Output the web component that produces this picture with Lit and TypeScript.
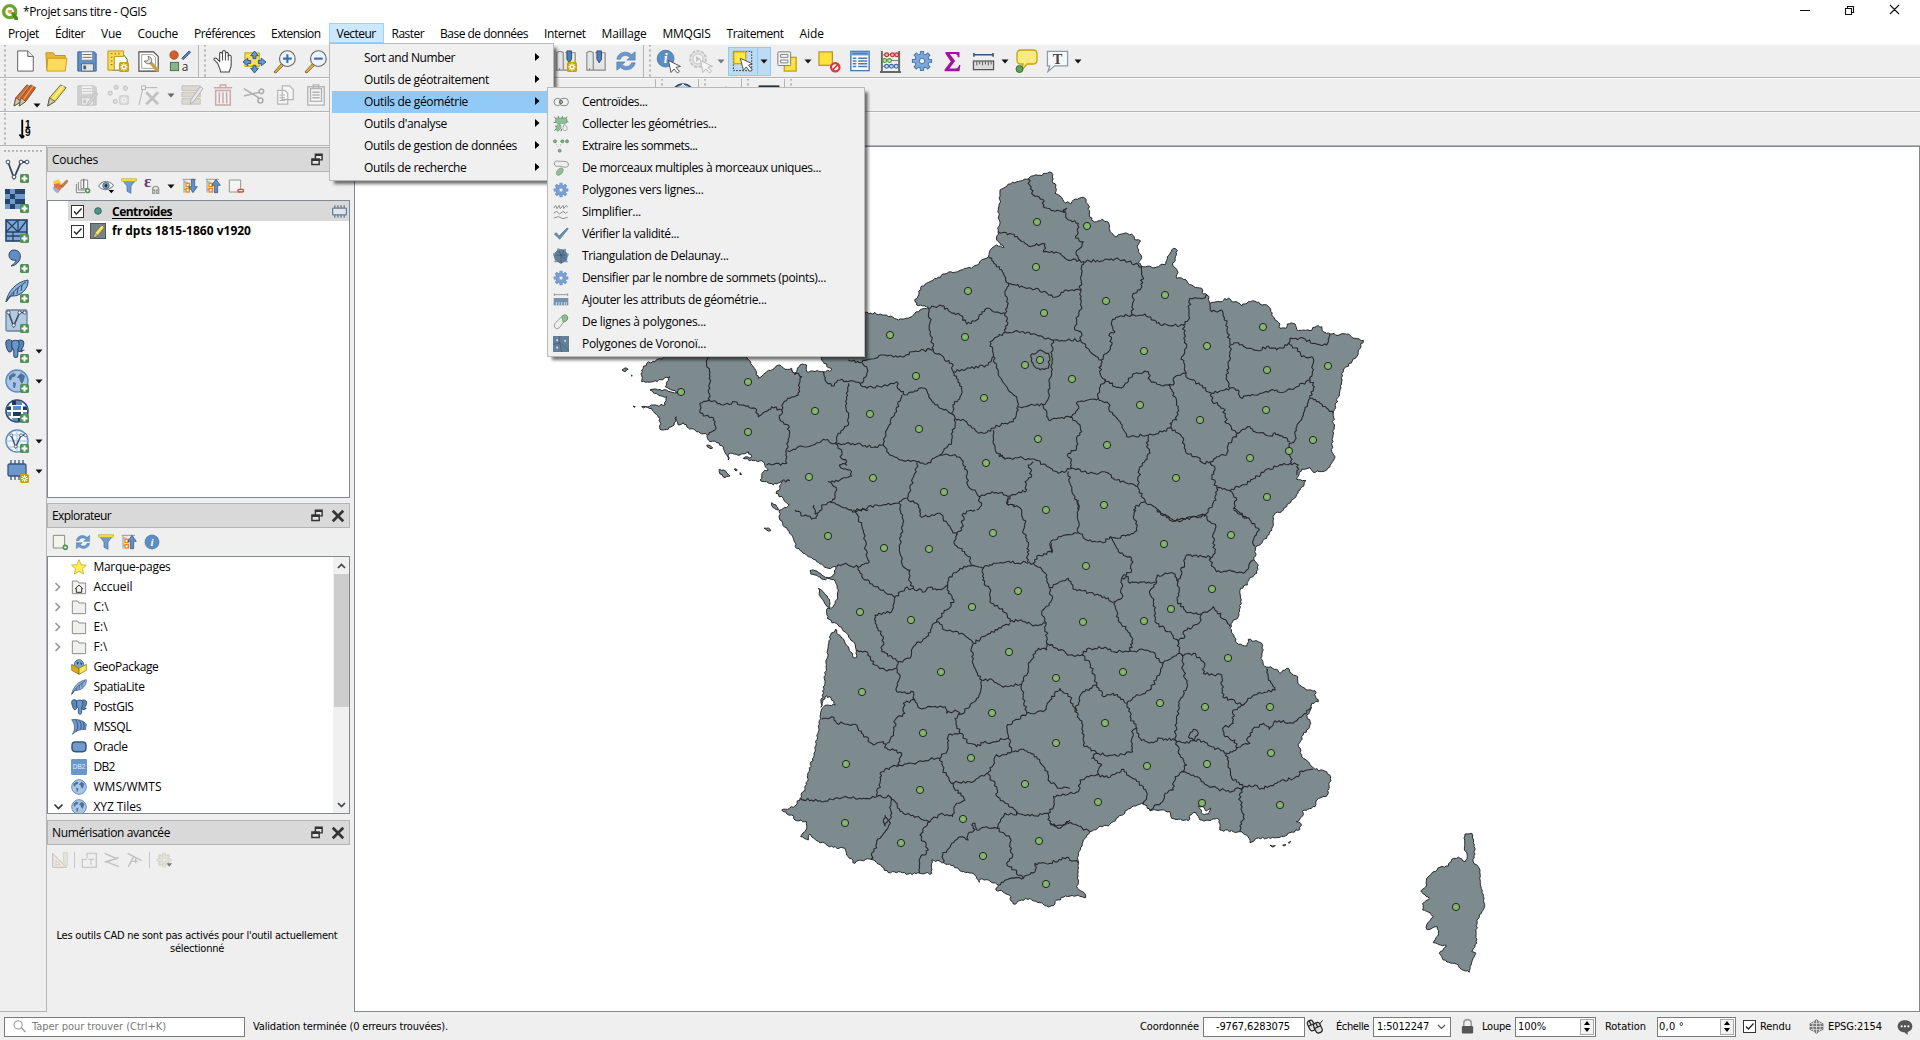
import { LitElement, html, css, svg, nothing } from "lit";
import { customElement } from "lit/decorators.js";

/* ---------- icons (24 x 24 boxes) ---------- */
const B = "#5d8ac0";
const D = "#2b4a6f";
const plus = svg`<rect x="15" y="15" width="9" height="9" rx="1.500" fill="#4f9153"/><path d="M19.500 16.500v6M16.500 19.500h6" stroke="#fff" stroke-width="2"/>`;
const spark = (x: number, y: number) => svg`<g transform="translate(${x} ${y})"><rect width="11" height="11" rx="2" fill="#caa20c"/><path d="M5.500 1.500v8M1.500 5.500h8M2.700 2.700l5.600 5.600M8.300 2.700l-5.600 5.600" stroke="#fff" stroke-width="1.300"/><circle cx="5.500" cy="5.500" r="1.200" fill="#caa20c"/></g>`;
const cursor = svg`<path d="M12.500 11.500l2.500 12 3-3.500 3.500 4 2-1.600-3.500-4 4.500-1z" fill="#fff" stroke="#555" stroke-width="1"/>`;
const refresh = svg`<path d="M2 10C3 4 9 1 15 3l3 2 4-3v9h-9l3.500-3C12 4.500 7 6 6 10z" fill="#6a98cf" stroke="#3d6ea5" stroke-width=".6"/><path d="M22 14c-1 6-7 9-13 7l-3-2-4 3v-9h9l-3.500 3C12 19.500 17 18 18 14z" fill="#6a98cf" stroke="#3d6ea5" stroke-width=".6"/>`;
const gear = (f: string, s: string) => svg`<path d="M12 1v22M1 12h22M4.200 4.200l15.600 15.600M19.800 4.200L4.200 19.800" stroke="${s}" stroke-width="4.600"/><circle cx="12" cy="12" r="8.300" fill="${s}"/><path d="M12 2v20M2 12h20M5 5l14 14M19 5L5 19" stroke="${f}" stroke-width="3"/><circle cx="12" cy="12" r="7.300" fill="${f}"/><circle cx="12" cy="12" r="3" fill="#efefef" stroke="${s}"/>`;
const globeLand = svg`<circle cx="12" cy="12" r="11" fill="#a9c5e4" stroke="${B}" stroke-width="1.400"/><path d="M4 7l4-3 3 1-1 2.500-3 1-1 3-2-1zM13 7l3-3 4 3-1 4-2 4-2-3-1-3-2 0zM8 13l3 1-1 5-1.500 0z" fill="#3d6291" opacity=".85"/>`;
const elephant = svg`<path d="M9 3C7 .5 2 0 1 4c0 5 2 10 4 12 2 1 3-1 4-3z" fill="#5b86ba" stroke="${D}" stroke-width="1.300"/><path d="M15 3c3-3 9-2 8.500 3-1 5-3 7-3.500 8h3l-3 2-4-1z" fill="#5b86ba" stroke="${D}" stroke-width="1.300"/><path d="M9 3c2-2 6-2 8 0 2 4 0 8-1 10v7c0 4-5 4-5 0v-6c-3-3-3-8-2-11z" fill="#6b97cb" stroke="${D}" stroke-width="1.300"/>`;
const feather = svg`<path d="M1 23C3 12 11 3 23 1c1 8-7 17-17 16z" fill="#8fb4dc" stroke="${D}" stroke-width="1"/><path d="M1 23C6 14 13 8 21 3M9 13l-1 4M13 9l-1 6M17 6l-1 6" stroke="${D}" fill="none"/>`;
const funnel = svg`<path d="M1 2h22l-8 10v11l-6-3v-8z" fill="#6f9bd0" stroke="#3f6b9c" stroke-width="1"/><path d="M1 1h22v4H1z" fill="#f9e03a" stroke="#b9a31a" stroke-width=".7"/>`;
const floppy = svg`<path d="M2 2h18l2 2v19H2z" fill="#6090c8" stroke="#2f5d91"/><path d="M6 2h12v9H6z" fill="#fff" stroke="#88a"/><path d="M7 5h10M7 8h10" stroke="#555"/><path d="M6 15h13v8H6z" fill="#e4e4e4" stroke="#567"/><path d="M8 17h3v4H8z" fill="#3b618f"/>`;
const magn = (s: unknown) => svg`<path d="M1 23l8-9 2 2-8 8z" fill="#f2b02a" stroke="#5a4a20" stroke-width=".8"/><circle cx="15" cy="9" r="8.200" fill="#edf3fa" stroke="#666" stroke-width="1.200"/>${s}`;
const pencil = (f: string, d: string) => svg`<path d="M17 1l6 3-12 15-8 5 2-9z" fill="${f}" stroke="#5b5330" stroke-width=".9"/><path d="M20 2L8 17" stroke="${d}" stroke-width="1.600"/><path d="M5 15l6 4-8 5z" fill="#d8c7a5" stroke="#444" stroke-width=".8"/>`;
const info = svg`<circle cx="12" cy="12" r="10.500" fill="#5c8dc5" stroke="#3f6ea5"/><text x="12" y="18" font-family="Liberation Serif,serif" font-size="17" font-weight="700" font-style="italic" fill="#fff" text-anchor="middle">i</text>`;
const folder = svg`<path d="M2 3h8l2 3h10v16H2z" fill="#f0f0ef" stroke="#8d8d8d" stroke-width="1.500"/>`;
const tree = (p: string) => svg`<path d="M3 2v20M3 6h5M3 17h5M1 2h20" stroke="#999" stroke-width="1.500" fill="none"/><rect x="6" y="8" width="5" height="5" fill="#fff" stroke="#e8871a" stroke-width="2"/><rect x="6" y="16" width="5" height="5" fill="#fff" stroke="#e8871a" stroke-width="2"/><path d="${p}" fill="#5f8fca" stroke="${D}" stroke-width="1"/>`;
const vee = svg`<path d="M3 3l6 16 7-16h5" fill="none" stroke="#34495e" stroke-width="1.800"/><g fill="#fff" stroke="#34495e"><circle cx="3" cy="3" r="1.900"/><circle cx="9" cy="18" r="1.900"/><circle cx="16" cy="3" r="1.900"/><circle cx="22" cy="3" r="1.900"/></g>`;
const bookmark = svg`<path d="M2 3c2-2 5-2 7 0v19H2zM11 3h11v19H5V20" fill="#e6e6e6" stroke="#8a8a8a" stroke-width="1.300"/><path d="M13 1h5v9l-2.500 4L13 10z" fill="#4f7fbb" stroke="#2b4a6f"/>`;

const ICONS: Record<string, unknown> = {
  new: svg`<path d="M4 1h11l6 6v16H4z" fill="#fff" stroke="#555" stroke-width="1"/><path d="M15 1v6h6" fill="#eee" stroke="#555"/>`,
  open: svg`<path d="M1 3h8l2 3h11v16H2z" fill="#e8b92e" stroke="#b8901b"/><path d="M3 9h21l-2 14H2z" fill="#ffd95c" stroke="#c79d20"/>`,
  save: floppy,
  layout: svg`<path d="M6 5h12l4 5v12H6z" fill="#fff" stroke="#555"/><path d="M1 1h17v6H8v15H1z" fill="#fbdc56" stroke="#b8911b"/><path d="M4 4h2M4 8h2M4 12h2M4 16h2M9 3v2M13 3v2" stroke="#7c6414"/>${spark(13, 13)}`,
  layoutmgr: svg`<path d="M1 2h16l5 5v16H1z" fill="#fff" stroke="#444" stroke-width="1.200"/><path d="M4 5h12l3 3v12H4z" fill="none" stroke="#999"/><path d="M13 13l9 10" stroke="#c9a13c" stroke-width="3.600"/><path d="M7 12c1 3 5 4 7 2 2-3 1-6-3-7l1 3-2 2z" fill="#e4e4e4" stroke="#666"/>`,
  style: svg`<circle cx="5.500" cy="5.500" r="4.500" fill="#d3602c" stroke="#a7451a"/><rect x="1.500" y="13.500" width="9" height="9" fill="#88b489" stroke="#3f7044"/><path d="M14 9l8-8 1.500 1.500-8 8z" fill="${B}" stroke="${D}"/><text x="17.500" y="23" font-size="13" font-family="Open Sans,sans-serif" fill="#333" text-anchor="middle">a</text>`,
  pan: svg`<path d="M6 14L2 10c0-2 2-2 3-1l3 3V4c0-2 2-2 3 0V2c0-2 3-2 3 0v2c0-2 3-2 3 0v2c1-1 3-1 3 1v9c0 3-2 4-2 7H9c0-3-2-5-3-9z" fill="#fff" stroke="#444" stroke-width="1.100"/><path d="M11 4v7M14 4v7M17 5v6" stroke="#444"/>`,
  panfull: svg`<rect x="2" y="3" width="15" height="14" fill="#f7e24a" stroke="#b79b12"/><path d="M12 1l4 5h-2.500v3h-3V6H8zM12 24l4-5h-2.500v-3h-3v3H8zM0 12.500l5-4V11h3v3H5v2.500zM24 12.500l-5-4V11h-3v3h3v2.500z" fill="#6497d4" stroke="#2e5585"/>`,
  zoomin: magn(svg`<path d="M15 4.500v9M10.500 9h9" stroke="#3e6ea8" stroke-width="2.200"/>`),
  zoomout: magn(svg`<path d="M10.500 9h9" stroke="#3e6ea8" stroke-width="2.200"/>`),
  bookmarknew: svg`${bookmark}${spark(13, 13)}`,
  bookmark,
  refresh,
  identify: svg`<g transform="scale(.8)">${info}</g>${cursor}`,
  action: svg`<g opacity=".35"><circle cx="10" cy="10" r="8" fill="#ccc" stroke="#777" stroke-width="2" stroke-dasharray="3 1.500"/><circle cx="10" cy="10" r="5" fill="#fff" stroke="#777"/><path d="M8 7l5 3-5 3z" fill="#777"/>${cursor}</g>`,
  select: svg`<rect x="1.500" y="1.500" width="20" height="21" fill="none" stroke="#333" stroke-dasharray="2 1.300"/><rect x="2" y="2" width="13" height="13" fill="#ffe94a" stroke="#c2a100" stroke-width="1.300"/><path d="M9 9l3.500 13 3-3.500 4 5 2.500-2-4-5 4-1.500z" fill="#fff" stroke="#444"/>`,
  form: svg`<rect x="9" y="8" width="13" height="15" fill="#ffe23f" stroke="#b99b12" stroke-width="1.300"/><rect x="2" y="2" width="14" height="15" rx="1" fill="#f1f1f1" stroke="#777"/><path d="M5 5h8v3H5zM5 11h8v3H5z" fill="#fff" stroke="#777"/>`,
  deselect: svg`<rect x="1" y="2" width="14" height="14" fill="#ffe23f" stroke="#b99b12" stroke-width="1.300"/><circle cx="18" cy="18" r="5.500" fill="#d9373b"/><circle cx="18" cy="18" r="3.200" fill="#fff"/><path d="M15 21l6-6" stroke="#d9373b" stroke-width="1.600"/>`,
  table: svg`<rect x="2" y="1.500" width="20" height="21" fill="#fff" stroke="#4b7bb5" stroke-width="1.500"/><path d="M2 2h20v4H2z" fill="#78a6dc"/><path d="M4 9h4M4 12h4M4 15h4M4 18h4M10 9h10M10 12h10M10 15h10M10 18h10M4 4h16" stroke="#4b7bb5" stroke-width="1.500"/>`,
  abacus: svg`<path d="M3 1v21M21 1v21M1 23h22" stroke="#666" stroke-width="2"/><path d="M3 5h18M3 11h18M3 17h18" stroke="#777"/><g stroke-width="1.200"><g fill="#f3b5b5" stroke="#c02b2b"><circle cx="8" cy="5" r="2"/><circle cx="14" cy="5" r="2"/><circle cx="18.500" cy="5" r="2"/></g><g fill="#c6e6bf" stroke="#4a9b3d"><circle cx="6" cy="11" r="2"/><circle cx="11" cy="11" r="2"/></g><g fill="#c5daf0" stroke="#3a6ea7"><circle cx="8" cy="17" r="2"/><circle cx="13" cy="17" r="2"/><circle cx="18" cy="17" r="2"/></g></g>`,
  gear: gear("#7aa6dc", "#46719f"),
  sigma: svg`<path d="M4 1h16v6h-2c0-3-2-3.500-4-3.500H9l6 8-6.500 8.500H15c3 0 4-2 4.500-4h1.500L20 23H3v-2l7-9-6-9z" fill="#a3139e"/>`,
  ruler: svg`<path d="M2 5h20M2 3v4M22 3v4" stroke="#34527a" stroke-width="1.600"/><rect x="1.500" y="11.500" width="21" height="9" fill="#dcdcdc" stroke="#555" stroke-width="1.300"/><path d="M5 12v4M8 12v3M11 12v4M14 12v3M17 12v4M20 12v3" stroke="#555"/>`,
  tip: svg`<path d="M7 1h12q4 0 4 4v6q0 4-4 4h-6l-5 6 1-6H7q-4 0-4-4V5q0-4 4-4z" fill="#fbe981" stroke="#c4a40f" stroke-width="1.300"/><circle cx="5.500" cy="20" r="3.500" fill="#5fa158" stroke="#3a6e36"/>`,
  textann: svg`<path d="M1.500 1.500h21v15H9l-7 6 2-6H1.500z" fill="#f7f9fb" stroke="#8c9ba8" stroke-width="1.300"/><text x="12" y="14.500" font-family="Liberation Serif,serif" font-size="15" font-weight="700" fill="#444" text-anchor="middle">T</text>`,
  pencils: svg`<g transform="translate(-3 0)">${pencil("#d46a33", "#f09a68")}</g><g transform="translate(3 0) scale(.9 1)">${pencil("#cf5f25", "#f09a68")}</g>`,
  pencil: pencil("#f3dc4b", "#fff6a8"),
  savedit: svg`<g opacity=".3"><g style="filter:grayscale(1)">${floppy}</g><path d="M22 9l2 2-9 11-3 1 1-3z" fill="#999" stroke="#555"/></g>`,
  dots: svg`<g opacity=".35" fill="#bbb" stroke="#666"><circle cx="3.500" cy="10" r="2.300"/><circle cx="10" cy="3.500" r="2.300"/><circle cx="20" cy="4.500" r="2.300"/><circle cx="9" cy="19" r="2.300"/></g><g opacity=".35" style="filter:grayscale(1)">${spark(13, 12)}</g>`,
  vertex: svg`<g opacity=".38"><path d="M6 4h15M5 6L1 23" stroke="#444" fill="none"/><rect x="4" y="2" width="4" height="4" fill="#fff" stroke="#444"/><path d="M9 9l13 13M22 9L9 22" stroke="#777" stroke-width="3"/></g>`,
  modattr: svg`<g opacity=".38"><path d="M1 2h20v5H1zM1 9h20v5H1zM1 16h20v6H1z" fill="#bcb98f" stroke="#777"/><path d="M21 3l3 2-10 14-4 3 1-5z" fill="#ddd" stroke="#444"/></g>`,
  trash: svg`<g opacity=".38" fill="none" stroke="#8b3a3a" stroke-width="1.600"><path d="M4 7h16v16H4zM2 4h20M9 4V1h6v3M8 9v12M12 9v12M16 9v12"/></g>`,
  cut: svg`<g opacity=".42" fill="none" stroke="#555" stroke-width="1.700"><path d="M1 5l16 10M1 13l17-4"/><circle cx="20" cy="8" r="2.500"/><circle cx="19" cy="18" r="2.700"/></g>`,
  copy: svg`<g opacity=".38" fill="#fff" stroke="#555" stroke-width="1.300"><path d="M9 2h8l4 4v11H9zM4 7h8l3 3v12H4z"/><path d="M6 12h6M6 15h6M6 18h6"/></g>`,
  paste: svg`<g opacity=".38" fill="#fff" stroke="#555" stroke-width="1.500"><path d="M3 3h18v20H3zM6 5h12v14H6zM9 1h6v4H9z"/><path d="M8 9h8M8 12h8M8 15h8"/></g>`,
  sort: svg`<path d="M9 2v19M9 22l-3-4M9 22l2-3" stroke="#000" stroke-width="2" fill="none"/><text font-family="Liberation Sans,sans-serif" font-weight="700" font-size="11" x="12" y="11">1</text><text font-family="Liberation Sans,sans-serif" font-weight="700" font-size="11" x="12" y="20">9</text>`,
  globegrid: svg`<circle cx="12" cy="12" r="11" fill="#8fb2dc" stroke="${D}" stroke-width="1.600"/><path d="M12 1v22M1 12h22M3 6h18M3 18h18M12 1c-7 6-7 16 0 22M12 1c7 6 7 16 0 22" stroke="#fff" fill="none"/>`,
  ball: svg`<circle cx="12" cy="12" r="11" fill="#2c7fb8"/>`,
  screen: svg`<rect x="1" y="2" width="22" height="20" fill="#8aa9cf" stroke="#222c3a" stroke-width="3"/>`,
  addvec: svg`${vee}${plus}`,
  addras: svg`<path d="M0 0h20v20H0z" fill="#6d99cc"/><path d="M0 0h5v5H0zM10 0h5v5h-5zM15 0h5v5h-5zM5 5h5v5H5zM0 10h5v5H0zM10 10h5v5h-5zM5 15h5v5H5zM15 10h5v5h-5z" fill="#27436a"/>${plus}`,
  addmesh: svg`<rect x="1" y="1" width="21" height="21" fill="#7ea8d8" stroke="#27436a" stroke-width="1.600"/><path d="M1 13h21M13 1v12M1 1l12 12M13 1L1 13M22 1l-9 12M8 13v9M1 17h14" stroke="#27436a" stroke-width="1.300"/>${plus}`,
  addcsv: svg`<path d="M9 1c6 0 8 6 5 11-2 3-5 5-8 5 3-2 5-4 5-6-4 1-7-1-7-5 0-3 2-5 5-5z" fill="#5f8dc4" stroke="${D}"/>${plus}`,
  addspatia: svg`${feather}${plus}`,
  addvirt: svg`<rect x="1" y="1" width="21" height="21" rx="1.500" fill="#b4c9e0" stroke="#65829f" stroke-width="1.300"/><g transform="translate(1 1) scale(.85)">${vee}</g>${plus}`,
  addpg: svg`<g transform="scale(.8)">${elephant}</g>${plus}`,
  addwms: svg`${globeLand}${plus}`,
  addwcs: svg`<circle cx="12" cy="12" r="11" fill="#fff" stroke="${D}" stroke-width="1.600"/><path d="M7 2h10v4H7zM2 7h4v4H1zM8 7h8v4H8zM18 7h4l1 4h-5zM2 13h4v4H3zM8 13h8v4H8zM18 13h4l-1 4h-3zM7 19h10v3H8z" fill="#5d8ac0"/><path d="M8 13h8v4H8zM2 8h4v3H2zM18 8h4v3h-4zM7 2h4v4H7zM13 19h3v3h-3z" fill="#1f3b60"/>${plus}`,
  addwfs: svg`<circle cx="12" cy="12" r="11" fill="#eef4fb" stroke="${B}" stroke-width="1.400"/><path d="M12 1v22M1 12h22M4 6h17M4 18h17" stroke="#a6c0de"/><g transform="translate(4 4) scale(.75)">${vee}</g>${plus}`,
  addmem: svg`<path d="M6 1v5M10 1v5M14 1v5M18 1v5M6 16v5M10 16v5M14 16v5" stroke="#3b5672" stroke-width="1.300"/><rect x="3" y="5" width="18" height="12" rx="1.500" fill="#6b97cb" stroke="#33557f" stroke-width="1.300"/><g transform="translate(15 15) scale(.82)">${spark(0, 0)}</g>`,
  brush: svg`<path d="M2 5l8-3 6 9-7 3C4 14 1 10 2 5z" fill="#f5d23b"/><path d="M3 9l8-1 5 5-7 9c-4 0-7-6-6-13z" fill="#e2724e"/><path d="M1 14l5 1 5 3-3 4c-4 0-6-4-7-8z" fill="#9bb2cf"/><path d="M13 12l9-9 2 2-8 9z" fill="#c0843b" stroke="#8a5a2b"/>`,
  addgroup: svg`<path d="M2 9v13h13M5 6v12h12" stroke="#777" fill="none" stroke-width="1.300"/><path d="M9 3h10v13H9z" fill="#fff" stroke="#777" stroke-width="1.300"/><path d="M13 1v14" stroke="#777" stroke-width="2"/><circle cx="19" cy="19" r="4" fill="#4f9153"/><path d="M19 17v4M17 19h4" stroke="#fff" stroke-width="1.300"/>`,
  eye: svg`<path d="M1 12C6 3 17 3 23 11c-6 8-16 9-22 1z" fill="#fff" stroke="#8b8b8b" stroke-width="1.600"/><circle cx="12" cy="11.500" r="5" fill="#6f96c2" stroke="#47678b"/><circle cx="12" cy="11.500" r="2" fill="#222"/><path d="M16 18h8l-4 5z" fill="#000"/>`,
  funnel,
  eps: svg`<text x="0" y="14" font-family="Liberation Serif,serif" font-size="26" font-weight="700" fill="#6a3d78">ε</text><path d="M13 22v-5c0-6 9-6 9 0v5M13 18h3v5h-3zM19 18h3v5h-3z" fill="none" stroke="#999" stroke-width="2"/>`,
  expand: tree("M14 2h5v11h4l-6.500 9L10 13h4z"),
  collapse: tree("M14 22h5V11h4L16.500 2 10 11h4z"),
  remove: svg`<path d="M2 3h17v18H2z" fill="#f4f4f4" stroke="#7d8a7d" stroke-width="1.300"/><rect x="14" y="16" width="10" height="6" rx="2" fill="#e8474c"/><path d="M16 19h6" stroke="#fff" stroke-width="1.500"/>`,
  addsel: svg`<path d="M2 2h17v19H2z" fill="#f4f4ee" stroke="#8a8f80" stroke-width="1.500"/><circle cx="20" cy="20" r="3" fill="#fff" stroke="#4f9153" stroke-width="2.400"/>`,
  info,
  star: svg`<path d="M12 1l3.200 7.500 8 .8-6 5.400 1.800 8L12 18.500 5 22.700l1.800-8-6-5.400 8-.8z" fill="#ffee58" stroke="#c9a81c" stroke-width="1.200"/>`,
  home: svg`${folder}<path d="M6 15l6-6 6 6M8 14v6h8v-6" fill="none" stroke="#333" stroke-width="1.500"/>`,
  folder,
  gpkg: svg`<circle cx="12" cy="8" r="7" fill="#7fa6d3" stroke="${D}"/><path d="M8 4l4 1-2 4zM13 5l4 1-1 4z" fill="${D}"/><path d="M1 8l11 6v9L1 17z" fill="#d9ac16" stroke="#7c620b"/><path d="M23 8l-11 6v9l11-6z" fill="#ffe75a" stroke="#7c620b"/>`,
  feather, elephant,
  mssql: svg`<path d="M1 1c9-1 18 1 22 7-.5 3-1 5-1 8-7-1-14 1-20 7 4-6 5-14-1-22z" fill="#6f99cc" stroke="${D}"/><path d="M7 1c4 6 4 12 1 18M12 2c4 5 4 9 2 14M18 4c2 4 2 8 1 11" stroke="${D}" fill="none" stroke-width="1.300"/>`,
  oracle: svg`<rect x="1.500" y="4.500" width="21" height="14.500" rx="5" fill="#6f9acb" stroke="#35557f" stroke-width="2.200"/>`,
  db2: svg`<rect width="24" height="24" rx="2" fill="#6797cd"/><text x="12" y="15.500" font-size="9.500" font-family="Liberation Sans,sans-serif" fill="#e8f0fa" text-anchor="middle">DB2</text>`,
  globe: globeLand,
  chip: svg`<path d="M4.500 2v5M9.500 2v5M14.500 2v5M19.500 2v5M4.500 17v5M9.500 17v5M14.500 17v5M19.500 17v5" stroke="#5d7c95" stroke-width="2"/><rect x="1" y="6.500" width="22" height="11" rx="1.500" fill="#e2e6ea" stroke="#5d7c95" stroke-width="2"/>`,
  m1: svg`<g fill="none" stroke="#888" stroke-width="1.500"><circle cx="7" cy="12" r="5.500"/><rect x="10" y="6.500" width="13" height="11" rx="5"/></g><circle cx="12" cy="12" r="2.500" fill="#7bb083" stroke="#555"/>`,
  m2: svg`<g stroke="#777" stroke-width="1.500"><path d="M2 1l3 4M8 0v4M14 0v4M21 1l-3 4M1 10l4-1M23 9l-4-1M2 22l4-4M3 15l3 1M12 23l1-4"/></g><rect x="4" y="3" width="17" height="8" rx="3" fill="#8dc193" stroke="#5f8f66"/><path d="M9 12c4 0 4 8-2 11-5-3-1-11 2-11z" fill="#8dc193" stroke="#5f8f66"/><path d="M17 12c5 3 6 10 1 10s-3-6-1-10z" fill="#eee" stroke="#888"/>`,
  m3: svg`<g fill="#7bb083" stroke="#5e7a62"><circle cx="3" cy="5" r="2.300"/><circle cx="14" cy="5" r="2.300"/><circle cx="21" cy="5" r="2.300"/><circle cx="10" cy="19" r="2.300"/></g><path d="M5 9l1 2M7 12l1 2M12 9l-1 3" stroke="#aaa"/>`,
  m4: svg`<path d="M2 6c0-6 5-4 9-4s11-1 12 4-5 6-9 4S3 12 2 6z" fill="#eee" stroke="#888" stroke-width="1.300"/><path d="M13 12c5 1 1 11-6 11-5-2 1-12 6-11z" fill="#8dc193" stroke="#5f8f66"/>`,
  gearm: gear("#7aa0d4", "#6d94cb"),
  m6: svg`<path d="M1 6l3-4 2 5 3-5 2 5 4-5 1 5 4-5 2 3M1 14l4-3 5 4 5-4 4 3 3-2M1 21l7-2 7 3 7-2" fill="none" stroke="#8a8f92" stroke-width="1.500"/>`,
  m7: svg`<path d="M2 12l3-2 4 5L21 3l2 1L10 20z" fill="#6a8caa" stroke="#557591"/>`,
  m8: svg`<path d="M8 2l9 1 5 7-2 9-8 4-8-4-3-9z" fill="#62809a" stroke="#45607a"/><path d="M8 2l4 9 10-1M12 11L1 10M12 11l0 12M12 11l8 8M12 11l5-8" stroke="#38536b" fill="none"/><g fill="#8a99a5"><circle cx="8" cy="2" r="1.800"/><circle cx="18" cy="3" r="1.800"/><circle cx="22" cy="10" r="1.800"/><circle cx="20" cy="20" r="1.800"/><circle cx="4" cy="20" r="1.800"/><circle cx="2" cy="9" r="1.800"/></g>`,
  m10: svg`<path d="M2 4h20M2 2v4M22 2v4" stroke="#999" stroke-width="1.500"/><rect x="1" y="9" width="22" height="11" fill="#7592aa"/><path d="M5 20v-5M9 20v-5M13 20v-5M17 20v-5M20 20v-5" stroke="#dfe7ee" stroke-width="1.300"/>`,
  m11: svg`<path d="M13 4c4-4 9-3 9 2s-5 5-7 7-4 8-8 9-7-5-3-9 6-6 9-9z" fill="#eee" stroke="#888" stroke-width="1.300"/><path d="M13 4c4-4 9-3 9 2s-5 5-7 6z" fill="#8dc193" stroke="#5f8f66"/>`,
  m12: svg`<rect width="24" height="24" fill="#62809a"/><path d="M10 0v10L0 13M10 10l14 12M10 10l3 14" stroke="#45627b" fill="none" stroke-width="1.300"/><g fill="#dfe5ea"><rect x="5" y="5" width="2.600" height="2.600"/><rect x="17" y="6" width="2.600" height="2.600"/><rect x="5" y="16" width="2.600" height="2.600"/></g>`,
  cad1: svg`<g opacity=".3"><path d="M1 2v21h21z" fill="#e7cfc0" stroke="#6e4b3a" stroke-width="1.500"/><path d="M6 13v6h6z" fill="#fff" stroke="#6e4b3a"/><path d="M17 1h6v20l-6-6z" fill="#c7cbb0" stroke="#7a7c63"/></g>`,
  cad2: svg`<g opacity=".2" fill="none" stroke="#333" stroke-width="2"><path d="M9 9V2h14v21H2V11h7"/><path d="M11 11h9M15 11v8"/></g>`,
  cad3: svg`<g opacity=".25" fill="none" stroke="#333" stroke-width="2"><path d="M1 2l18 8-18 5M22 8L5 15l17 7"/></g>`,
  cad4: svg`<g opacity=".25" fill="none" stroke="#333" stroke-width="2"><path d="M1 2l21 11M10 7L2 22M6 14l10 0M13 9v8"/></g>`,
  cad5: svg`<g opacity=".35">${gear("#c9c6a0", "#8b8968")}</g><path d="M16 17h8l-4 5z" fill="#777"/>`,
  float: svg`<path d="M8 1h14v12h-5v8H2V9h6z" fill="#333"/><path d="M10.500 5h9v5.500H17V9h-6.500zM4.500 13.500h10v5h-10z" fill="#e6e6e6"/>`,
  close: svg`<path d="M3 3l18 18M21 3L3 21" stroke="#333" stroke-width="4.600"/>`,
  search: svg`<circle cx="9.500" cy="9" r="7.500" fill="none" stroke="#999" stroke-width="2"/><path d="M15 14l8 8" stroke="#999" stroke-width="2.500"/>`,
  mouse: svg`<g transform="rotate(-25 10 12)" fill="#ddd" stroke="#222" stroke-width="1.800"><rect x="2" y="0" width="9" height="16" rx="4"/><rect x="9" y="7" width="10" height="16" rx="4.500"/><path d="M2 7h9M9 14h10M6.500 0v7M14 7v7"/></g><path d="M17 8l5-6" stroke="#222" stroke-width="1.500"/>`,
  lock: svg`<path d="M6 12V7c0-8 12-8 12 0v5" fill="none" stroke="#999" stroke-width="2.500"/><rect x="3" y="11" width="18" height="12" rx="2" fill="#555"/>`,
  crs: svg`<path d="M12 0l5 4 6 3v10l-6 3-5 4-5-4-6-3V7l6-3z" fill="#777"/><g fill="none" stroke="#e4e4e4" stroke-width="1.300"><path d="M3 7h18M1 12h22M3 17h18M12 1v22M9 2c-4 6-4 14 0 20M15 2c4 6 4 14 0 20"/></g>`,
  bubble: svg`<path d="M12 2c7 0 11 4 11 9s-4 8-7 8.500V24l-5-4C5 20 1 16 1 11s4-9 11-9z" fill="#565656"/><g fill="#fff"><circle cx="7" cy="11" r="1.600"/><circle cx="12" cy="11" r="1.600"/><circle cx="17" cy="11" r="1.600"/></g>`,
};

const ic = (n: string, s = 24) =>
  html`<svg class="ic" width=${s} height=${s} viewBox="0 0 24 24">${ICONS[n]}</svg>`;

/* label stretched or tightened to a width in px */
const t = (text: string, w: number) => html`<span class="t" data-w=${w}>${text}</span>`;
const caret = (c = "#111") => html`<svg width="8" height="5" viewBox="0 0 8 5"><path d="M.5.5h7L4 4.500z" fill=${c} /></svg>`;

/* ---------- map geometry ---------- */
/* sheet origins; coordinates inside a sheet are in thirds of a pixel */
const ORG: Record<string, [number, number]> = { N: [600, 160], E: [1000, 160], S: [740, 510], T: [1050, 510], C: [1380, 810] };
type P = [number, number];
const pts = (k: string, s: string): P[] =>
  s.trim().split(/\s+/).map((q) => {
    const [x, y] = q.split(",").map(Number);
    return [ORG[k][0] + x / 3 - 355, ORG[k][1] + y / 3 - 147] as P;
  });
const noise = (x: number, y: number) => {
  const v = Math.sin(x * 12.9898 + y * 78.233) * 43758.5453;
  return (v - Math.floor(v)) * 2 - 1;
};
const rough = (p: P[], amp: number, close = false) => {
  const q = close ? [...p, p[0]] : p;
  let d = `M${q[0][0].toFixed(1)} ${q[0][1].toFixed(1)}`;
  for (let i = 1; i < q.length; i++) {
    const [ax, ay] = q[i - 1];
    const [bx, by] = q[i];
    const dx = bx - ax, dy = by - ay, l = Math.hypot(dx, dy) || 1;
    const n = Math.max(1, Math.round(l / 2));
    for (let j = 1; j <= n; j++) {
      const f = j / n;
      const o = j === n ? 0 : noise(ax + dx * f, ay + dy * f) * amp;
      d += `L${(ax + dx * f - (dy / l) * o).toFixed(1)} ${(ay + dy * f + (dx / l) * o).toFixed(1)}`;
    }
  }
  return d + (close ? "Z" : "");
};

const COAST: P[] = [
  ...pts("E", "0,90 10,85 25,72 50,65 85,57 95,48 120,46 155,38 160,70 168,75 165,100 180,108 192,125 212,132 220,120 250,112 265,135 268,165 275,180 290,185 305,178 325,187 335,220 345,230 365,222 395,222 408,240 422,243 412,258 415,275 425,293 415,308 430,320 465,323 498,312 502,290 520,265 532,272 525,295 518,315 532,332 530,355 550,358 580,378 605,385 610,402 622,405 630,430 660,425 685,414 695,425 715,428 725,438 745,425 765,424 780,432 800,435 812,448 815,465 840,492 840,505 858,505 862,492 885,492 895,512 910,510 930,512 950,498 965,500 970,515 990,522 1020,524 1045,522 1065,535 1090,541 1075,570 1070,590 1030,630 1020,690 1000,760 1000,790 1004,795 995,850 995,875 1004,895 980,930 940,937 930,923 905,928 890,958 918,962 900,990 860,1040 850,1050"),
  ...pts("T", "672,15 668,50 650,85 620,108 612,150 625,165 620,190 598,205 592,225 572,235 572,275 565,320 550,330 540,355 560,398 590,408 595,388 635,400 640,420 632,445 640,465 655,472 680,478 690,490 715,475 725,490 743,500 748,525 775,540 795,542 797,560 805,575 785,580 783,595 770,615 782,640 760,675 745,710 760,745 795,778 830,785 842,800 838,830 828,860 800,870 795,890 762,900 755,920 738,935 752,940 750,958 720,968 690,982 650,985 620,985 600,998 590,975 570,965 550,965 510,960 508,930 500,925 480,932 450,930 438,908 420,915 415,932 385,928 365,925 360,905 330,900 300,902 285,885 275,880 245,890 205,922 190,935 175,948 150,948 120,965 100,990 85,1030 83,1080 83,1135 98,1145 107,1163 85,1155 60,1158 40,1162 15,1175 10,1187"),
  ...pts("S", "920,1188 900,1178 870,1165 845,1170 820,1182 808,1155 785,1142 768,1140 775,1125 745,1110 720,1108 718,1117 700,1090 665,1085 655,1075 612,1058 575,1050 575,1090 540,1090 505,1092 475,1085 445,1088 425,1070 393,1048 360,1050 345,1060 325,1040 315,1015 280,1012 230,992 210,972 205,990 182,980 198,960 200,935 165,930 155,915 130,905 125,900 160,892 180,865 195,835 207,785 222,730 235,665 240,620 250,592 262,585 286,585 273,565 260,557 248,575 243,592 258,470 272,375 287,357 290,370 308,385 325,410 340,443 350,442 346,405 325,375 298,350 262,325 260,298 280,290 290,270 295,240 285,212 265,205 285,190 288,170 265,175 230,155 205,140 170,115 160,85 120,30 118,0"),
  ...pts("N", "538,1050 568,1035 550,1015 528,1000 540,985 545,965 570,962 545,962 520,975 500,965 480,960 490,935 505,930 490,905 460,902 430,895 455,890 445,875 420,885 385,882 385,900 370,860 350,848 325,840 322,825 290,815 260,800 250,788 235,795 228,770 222,795 205,808 180,808 180,775 155,745 125,740 195,735 200,710 175,705 150,690 180,688 235,700 195,680 210,650 160,665 125,665 125,630 140,610 165,605 190,592 190,560 420,560 440,592 460,620 475,655 500,635 540,615 555,628 575,625 585,645 600,615 620,615 620,635 670,635 695,630 670,605 665,590 640,480 700,450 795,457 860,465 895,480 930,472 960,450 985,442 950,435 945,425 965,378 1000,360 1035,342 1100,325 1120,320 1165,290 1175,265 1190,255 1212,262 1190,240 1195,210 1198,180 1195,150 1200,120"),
];

const LINES: Record<string, string> = {
  N: `325,592 320,610 330,650 325,690 330,722|330,722 300,730 300,750 310,768 335,772 345,785 345,810 325,825|330,722 370,735 405,725 425,735 455,745 470,750 475,770 495,755 515,740 545,750 550,730 570,715 595,705 600,660 605,650 575,630|545,750 540,780 565,795 568,825 560,850 560,910 500,915|562,872 610,860 640,855 670,838 705,850|705,850 715,820 745,795 740,730 745,670|670,635 675,660 695,678 720,660 780,670 800,685 850,678 890,665 900,690 915,705|780,670 800,645 800,620 785,607|745,600 785,607 850,585 905,590 935,575 1000,568|985,445 990,490 995,540 1000,575 1055,610 1060,635 1085,680 1080,710 1058,735 1058,765|915,705 945,692 975,685 990,715 1020,745 1058,762 1065,775|905,705 880,770 865,800 850,850|705,850 770,852 820,862 850,855|850,850 860,875 900,900 950,905 980,912 1020,885 1055,845 1065,775|1065,775 1100,785 1130,815 1150,820 1180,805 1205,790 1240,785 1255,750 1250,710 1225,690 1195,640 1180,590|1060,635 1110,625 1165,615 1180,580 1170,545 1210,520 1222,495 1215,460 1225,430 1215,400 1225,370 1205,330 1180,305 1165,290|985,445 1020,435 1050,455 1080,465 1100,492 1130,480 1160,445 1215,460|705,850 725,870 720,890 740,905 740,915 718,915 725,925 750,930 755,948 720,960 685,965 710,990 705,1010 690,1025 665,1035 665,1050 645,1062 643,1035|690,1025 715,1035 765,1055 830,1035 895,1030 920,1015|952,907 945,940 930,985 922,1015 950,1030 960,1055|1020,885 1060,885 1085,900 1100,930 1105,980 1125,990 1145,1030 1130,1050|1140,1010 1165,1000 1200,998|1225,1010 1220,1030 1245,1035|1180,810 1180,850 1190,880 1215,895`,
  E: `85,57 100,105 128,118 130,140 160,152 195,155 200,145 190,150 205,180 235,190 228,235 250,245 240,265 228,278 240,300|-5,215 35,222 60,240 85,258 135,252 130,275 180,280 195,295 250,305 310,302 345,297 385,305 425,320|250,305 245,345 240,385 245,440 230,480 225,510 245,520 242,540|25,372 75,383 110,385 165,412 200,390 245,388|15,515 70,515 110,525 160,540 242,540|158,540 155,590 155,640 145,690 145,715 130,735 145,780|92,585 120,570 145,580 150,600 145,625 120,630 100,615 92,585|242,540 270,575 303,600|303,600 335,555 330,520 345,515 335,485 360,468 395,465 435,462 470,490 510,497 550,495|395,465 400,400 420,390 428,350 425,320|550,495 565,480 570,415 610,415 622,405|550,495 555,540 560,560 545,590 558,650 600,675 635,700 690,685|630,430 635,455 665,450 680,490 690,555 690,600 680,650 690,685|692,555 710,548 740,565 775,572 805,558 830,570 865,550|865,550 870,535 910,535 945,550 980,555 990,522|865,550 900,575 905,590 935,590 940,610 930,660|690,685 715,690 720,712 780,700 830,690 850,697 890,680 930,660 943,680 930,715|930,715 960,730 1000,760|930,715 910,760 890,800 885,840 868,850 868,880 875,910|635,700 635,720 670,745 680,790 715,820|715,820 750,800 765,815 810,828 825,818 870,845|303,600 300,640 315,658 345,680 370,680 385,655 410,638 445,635 450,660 490,678 505,675|505,675 520,675 525,650 558,640|505,675 525,710 535,740 530,780 510,790 515,805 445,825 380,830 360,785 330,755 325,730 295,715|315,658 298,685 295,715 232,725 232,750 210,772 145,780|515,805 545,830 560,880 590,890 610,910 632,905|715,820 685,855 680,885 650,890 632,905 645,925 635,945 650,985|210,772 240,795 245,815 230,840 230,865 205,880 215,925|215,925 250,935 290,943 312,935 350,960 380,970 410,980|445,825 440,860 450,880 420,920 415,985 435,1025|435,1025 475,1050 520,1080 580,1070 612,1065|650,985 648,1020 612,1070|650,985 690,992 750,965 800,928 870,910 895,915 890,945|690,992 710,1020 700,1045 740,1075|55,740 100,735 130,735|0,880 15,898 50,893 95,897 130,912 175,940 215,925|100,905 85,915 95,945 75,965 80,990 30,1010 20,1030 55,1040 65,1050|205,935 210,970 225,1010 238,1050|435,1025 405,1040 405,1055|0,998 30,1008`,
  S: `345,5 365,45 375,90 380,140 388,155 355,172 318,160 290,170|340,0 385,0|355,172 365,200 400,228 430,240 465,262|478,-20 488,40 480,90 480,130 490,170 510,180 510,215 520,235|465,262 495,235 520,235 555,245 570,232 590,240 625,228|540,0 545,22 600,10 625,45 650,75|650,75 665,60 670,10 705,0|650,75 645,105 690,140 692,168|692,168 660,175 625,205 625,250 642,270 620,300 590,330|692,168 730,175 760,160 800,155 880,160|845,0 855,40 850,60 865,110 862,155|730,175 728,210 748,235 750,275 800,310 810,335|880,160 890,140 935,125 935,100|880,160 920,195 930,235 935,270 905,310 918,345 920,400|810,335 845,330 880,348 918,340|810,340 740,375 700,400|590,335 615,360 665,370 700,400|700,400 695,440 705,475 725,510|590,330 560,380 520,410 510,445 475,455|465,262 455,305 405,315 410,345 430,380 425,425 475,455 470,475|350,420 380,425 405,465 435,480 470,475|470,475 480,495 470,545 510,550 520,545 525,570|525,570 540,595 580,590 615,590 620,610 645,600 660,615|725,510 720,550 690,590 645,625 660,670|725,510 755,508 790,532 845,522|920,400 920,420 895,415 865,460 865,485 845,522|920,400 935,403|845,522 850,560 860,610|860,610 910,605 930,570|860,610 800,650 805,685 815,725|660,670 685,700 710,710 730,698 760,695 805,685|660,670 625,675 625,715 600,745|600,745 570,748 530,758 470,765|525,570 490,580 495,610 465,630 460,670 450,690 440,700|245,628 275,620 290,640 345,643 365,670 400,705 430,695 440,715 485,730 475,765|475,770 455,770 425,785 420,820 410,858|180,865 215,870 245,875 310,862 370,865 410,860 450,860|450,860 490,910 540,925 570,935|600,745 610,780 630,815 675,870 650,880 638,920|638,920 605,910 570,935 540,975 565,1020 540,1045 538,1090|450,860 455,910 445,950 410,1000 393,1048|435,915 445,930 435,948 430,935 435,915|635,818 700,815 742,790|815,725 765,740 760,765 742,790 770,830 770,858 830,905|815,725 850,718 890,740 915,775 930,815|830,905 830,915 795,910 770,955|830,905 870,918 925,910 930,940 960,955 990,930|925,910 940,890 940,858|770,955 740,950 710,960 705,940 695,945 705,958 685,970 685,990 660,980 635,1000 608,1035 610,1058|770,955 810,985 815,1045 800,1060 850,1105|775,1125 805,1108 850,1105 885,1085 885,1060 930,1060|232,10 228,25 190,18 165,0`,
  T: `85,-30 85,68|5,130 0,100 25,80 85,68 115,92 160,98 180,80|180,80 205,85 255,65 262,45 250,20 258,0|180,80 205,125 245,145 245,180 215,205 215,265 195,275|0,232 55,205 70,238 130,250 195,275|195,275 205,330 240,370 248,400 235,425|215,205 235,200 240,220 320,215 322,195 370,190 385,215|385,215 410,135 480,140 480,150|370,35 465,15|320,0 370,35|465,15 480,35 498,50 488,75 495,130 478,150 500,185 540,180 580,190 610,150|550,0 600,30 628,60 610,90 615,110|320,215 298,245 310,275 320,340 365,372|385,215 382,275 415,308 455,312 450,335 400,365 405,380 385,395 370,385 365,372|455,312 490,290 540,350|385,395 388,430 340,458|0,405 60,435 95,435 110,418 165,412 190,425 235,425 290,420 315,430 320,445 340,458|340,458 330,490 300,540 255,560 232,580|95,435 120,460 135,500 140,525 160,560 190,550 232,580|140,525 95,550 75,605|0,570 30,535 60,560 75,605 95,640 100,705 140,730|232,580 240,620 260,655 245,665 248,725 200,738 140,730 125,745 155,765 140,795|260,655 270,685 305,697 330,685 375,690|395,435 400,480 412,530 390,570 380,640 375,690|388,430 400,437 430,430 460,455 460,490 515,495 518,560 580,585|580,585 610,555 675,540 655,510 650,475|580,585 550,600 550,640 518,655 525,680 555,690 560,715|375,690 405,700 450,690 485,710 530,730 560,715|415,680 430,658 445,670 430,690 415,680|560,715 600,700 590,690 610,655 640,640 658,658 675,632 730,640 785,590|375,690 390,735 410,765 395,785 375,800 370,840 345,850 340,870 300,902|395,785 430,795 475,828 540,847 580,830|530,730 535,760 545,805 580,830|580,830 615,825 630,838 690,815 745,800 748,785 790,778|580,830 568,855 580,920 570,965|140,795 180,802 215,778 240,800 280,830 290,860 280,885|140,795 90,810 85,845 10,860|0,815 30,835 60,835|0,945 30,945 50,935 80,945 120,965|0,1060 50,1042 83,1058`,
};
const ISLES: [string, string][] = [
  ["C", "255,72 275,70 285,115 280,155 300,180 303,230 312,265 312,295 290,330 290,400 275,425 288,430 270,470 268,487 240,475 235,465 190,450 178,430 200,408 160,398 175,375 172,350 140,358 140,345 160,320 150,308 128,300 128,280 148,265 122,243 140,225 140,205 155,190 180,172 205,168 215,148 235,142 255,155 262,140 253,115"],
  ["N", "66,630 75,624 84,628 76,635"], ["N", "94,645 97,647 95,649"], ["N", "100,738 106,740 103,742"], ["N", "320,856 332,858 338,864 328,864"],
  ["N", "358,928 372,930 390,948 375,953 360,942"], ["N", "403,927 412,930 408,933"], ["N", "420,938 425,943 420,944"], ["N", "515,1028 528,1035 535,1050 518,1042"],
  ["S", "73,54 85,54 92,62 80,60"], ["S", "210,182 225,182 245,195 268,205 250,208 225,195 212,192"], ["S", "235,235 262,258 270,280 268,297 258,285 240,258"],
  ["T", "660,1006 668,1008 676,1007 668,1012"], ["T", "698,1006 708,1004 702,1008"], ["T", "715,998 722,994 718,1000"],
];
const DOTS: Record<string, string> = {
  N: "243,696 444,666 444,816 645,753 627,951 810,762 819,954 957,807 948,648 870,525 1095,531 1104,393 1032,996 1152,714 1158,909",
  E: "111,186 261,198 108,321 132,459 318,423 495,405 75,615 120,600 216,657 432,573 621,558 789,501 801,630 984,618 420,735 600,780 798,750 939,840 114,837 321,855 750,894 867,873 528,954 801,1011 138,1050 312,1035",
  S: "264,78 432,114 567,117 759,69 360,306 513,330 696,291 834,243 603,486 807,426 366,546 549,669 756,609 318,762 693,744 540,840 855,822 669,927 315,939 483,999 729,1038 897,993 918,1122 948,504 948,699",
  T: "342,102 543,75 108,168 486,237 363,297 282,333 99,336 534,444 219,486 330,579 465,591 660,591 165,639 291,768 471,762 663,729 144,876 456,879 690,885",
  C: "228,291",
};

@customElement("france-map")
export class FranceMap extends LitElement {
  static styles = css`:host{display:block;width:100%;height:100%;overflow:hidden;background:#fff}svg{display:block}`;
  render() {
    return html`<svg width="1564" height="865" viewBox="0 0 1564 865">
      <g fill="#7d8b8f" stroke="#27292b" stroke-width="1" stroke-linejoin="round">
        <path d=${rough(COAST, 1.1, true)} />
        ${ISLES.map(([k, s]) => svg`<path d=${rough(pts(k, s), 0.8, true)} />`)}
      </g>
      <g fill="none" stroke="#27292b" stroke-width="1.100" stroke-linejoin="round">
        ${Object.entries(LINES).map(([k, s]) => s.split("|").map((l) => svg`<path d=${rough(pts(k, l), 1.5)} />`))}
      </g>
      <path d=${rough(pts("T", "445,888 462,892 468,903 482,894 475,912 458,912"), 0.6, true)} fill="#fff" stroke="#2b2e30" />
      <g fill="#85b66f" stroke="#232323">
        ${Object.entries(DOTS).map(([k, s]) => pts(k, s).map(([x, y]) => svg`<circle cx=${x} cy=${y} r="3.600" />`))}
      </g>
    </svg>`;
  }
}

/* ---------- chrome data ---------- */
const MENUS: [string, number][] = [["Projet", 31], ["Éditer", 30], ["Vue", 20.5], ["Couche", 40.5], ["Préférences", 61], ["Extension", 49.5], ["Vecteur", 39], ["Raster", 32.5], ["Base de données", 88], ["Internet", 41.5], ["Maillage", 45], ["MMQGIS", 48], ["Traitement", 57], ["Aide", 24.5]];
const SUB1: [string, number][] = [["Sort and Number", 91], ["Outils de géotraitement", 125], ["Outils de géométrie", 104], ["Outils d'analyse", 83], ["Outils de gestion de données", 153], ["Outils de recherche", 102.5]];
const SUB2: [string, string, number][] = [["m1", "Centroïdes...", 65.5], ["m2", "Collecter les géométries...", 134.5], ["m3", "Extraire les sommets...", 115.5], ["m4", "De morceaux multiples à morceaux uniques...", 239], ["gearm", "Polygones vers lignes...", 121.5], ["m6", "Simplifier...", 59], ["m7", "Vérifier la validité...", 97], ["m8", "Triangulation de Delaunay...", 146.5], ["gearm", "Densifier par le nombre de sommets (points)...", 244], ["m10", "Ajouter les attributs de géométrie...", 184.5], ["m11", "De lignes à polygones...", 124], ["m12", "Polygones de Voronoï...", 124]];
const EXPL: [string, string, number, string][] = [["star", "Marque-pages", 77, ""], ["home", "Accueil", 39, ">"], ["folder", "C:\\", 15, ">"], ["folder", "E:\\", 14, ">"], ["folder", "F:\\", 14, ">"], ["gpkg", "GeoPackage", 65, ""], ["feather", "SpatiaLite", 51, ""], ["elephant", "PostGIS", 40, ""], ["mssql", "MSSQL", 37.5, ""], ["oracle", "Oracle", 34, ""], ["db2", "DB2", 21, ""], ["globe", "WMS/WMTS", 68, ""], ["globe", "XYZ Tiles", 48, "v"]];
const SIDE: [string, boolean][] = [["addvec", false], ["addras", false], ["addmesh", false], ["addcsv", false], ["addspatia", false], ["addvirt", false], ["addpg", true], ["addwms", true], ["addwcs", false], ["addwfs", true], ["addmem", true]];

const slot = (n: string, w: number, s = 24) => html`<span class="slot" style="width:${w}px">${ic(n, s)}</span>`;
const car = (w: number, c?: string) => html`<span class="slot" style="width:${w}px">${caret(c)}</span>`;
const gap = (w: number) => html`<span class="gap" style="width:${w}px"></span>`;
const grip = (w: number, first = false) => html`<span class="grip ${first ? "first" : ""}" style="width:${w}px"></span>`;

@customElement("app-root")
export class AppRoot extends LitElement {
  static styles = css`
    :host { display: block; position: relative; width: 1920px; height: 1040px; overflow: hidden; background: #efefef; font: 12px/16px "Open Sans", "Noto Sans", sans-serif; color: #000; }
    * { box-sizing: border-box; }
    .app { display: flex; flex-direction: column; height: 1040px; }
    .t { display: inline-block; white-space: pre; flex: none; }
    .gap { flex: none; }
    svg { flex: none; display: block; overflow: visible; }
    .title { height: 23px; background: #fff; display: flex; align-items: center; }
    .title .t { margin-top: 1px; }
    .title .logo { margin: 0 5px 0 2px; }
    .title .ctl { margin-left: auto; margin-right: 19px; margin-top: -3px; }
    .menubar { height: 21px; background: #fff; display: flex; }
    .menubar .m { padding: 1px 8px 0; display: flex; align-items: center; height: 20px; }
    .menubar .on { background: #cce8ff; outline: 1px solid #99d1ff; outline-offset: -1px; }
    .bar { height: 34px; border-bottom: 1px solid #b4b4b4; border-top: 1px solid #fafafa; display: flex; align-items: center; flex: none; }
    .slot { flex: none; display: flex; align-items: center; justify-content: center; }
    .slot, .grip { height: 32px; }
    .grip { flex: none; border-left: 1px solid #b4b4b4; background: radial-gradient(circle, #b8b8b8 1px, transparent 1.3px) 4px 3px / 4px 5px repeat-y; }
    .grip.first { border-left: 0; background-position: 3px 3px; }
    .active { display: flex; height: 29px; width: 43px; background: #bcdcf4; border: 1px solid #90c8f6; flex: none; align-items: center; }
    .active .l { width: 29px; display: flex; justify-content: center; border-right: 1px solid #90c8f6; height: 27px; align-items: center; }
    .active .r { width: 12px; display: flex; justify-content: center; }
    .pencilbox { position: relative; }
    .pencilbox svg + svg { position: absolute; right: 0; bottom: 3px; }
    .main { height: 866px; display: flex; flex: none; }
    .side { width: 47px; border-right: 1px solid #b4b4b4; border-bottom: 1px solid #b4b4b4; flex: none; padding-top: 2px; }
    .side .hg { height: 6px; margin: 0 3px 2px 3px; background: radial-gradient(circle, #b8b8b8 1px, transparent 1.3px) 0 0 / 4px 6px repeat-x; }
    .side .s { height: 30px; display: flex; align-items: center; padding-left: 5px; gap: 6px; }
    .panels { width: 307px; flex: none; display: flex; flex-direction: column; padding: 1px 4px 0 0; }
    .ph { height: 25px; background: #d9d9d9; border: 1px solid #b4b4b4; display: flex; align-items: center; padding: 0 4px; flex: none; font-size: 12px; }
    .ph .bt { margin-left: auto; display: flex; gap: 7px; }
    .pt { height: 28px; flex: none; display: flex; align-items: center; padding-left: 5px; }
    .pt .ic { margin-right: 7px; }
    .list { background: #fff; border: 1px solid #828790; flex: none; overflow: hidden; }
    .layers { height: 298px; margin-bottom: 5px; }
    .lay { height: 20px; display: flex; align-items: center; font-weight: 700; margin-left: 20px; padding-left: 3px; }
    .lay.sel { background: #d9d9d9; }
    .lay.sel .t { border-bottom: 1px solid #000; height: 15px; line-height: 15px; }
    .lay .chip { margin-left: auto; margin-right: 2px; }
    .cb { width: 13px; height: 13px; border: 1px solid #333; background: #fff; flex: none; display: block; }
    .sym { width: 16px; height: 16px; margin: 0 6px; display: flex; align-items: center; justify-content: center; flex: none; }
    .sym.poly { background: #748387; border: 1px solid #555; }
    .exp { height: 258px; display: flex; margin-bottom: 6px; }
    .exrows { flex: 1; }
    .ex { height: 20px; display: flex; align-items: center; }
    .ex .tw { width: 23px; padding-left: 6px; flex: none; }
    .ex .ic { margin-right: 6.500px; }
    .sb { width: 16px; background: #f0f0f0; display: flex; flex-direction: column; align-items: center; }
    .sb .a { height: 17px; display: flex; align-items: center; }
    .sb .th { width: 15px; height: 133px; background: #cdcdcd; }
    .sb .b { margin-top: auto; }
    .pt.cad { height: 29px; }
    .cad .ic { margin-right: 0; }
    .vs { width: 1px; height: 16px; background: #c8c8c8; margin: 0 6px; }
    .msg { font: 11px/13px "DejaVu Sans Condensed", "DejaVu Sans", sans-serif; text-align: center; padding-top: 55px; padding-right: 3px; display: flex; flex-direction: column; align-items: center; }
    .map { flex: 1; border: 1px solid #828790; min-width: 0; }
    .status { height: 28px; padding-top: 1px; display: flex; align-items: center; font: 11px/14px "DejaVu Sans Condensed", "DejaVu Sans", sans-serif; flex: none; }
    .in { height: 20px; background: #fff; border: 1px solid #7a7a7a; display: flex; align-items: center; flex: none; }
    .spin { margin-left: auto; width: 14px; height: 16px; margin-right: 1px; border: 1px solid #aaa; background: #f3f3f3; display: flex; flex-direction: column; justify-content: space-around; align-items: center; }
    .ghost { color: #787878; }
    .dd { position: absolute; background: #f0f0f0; border: 1px solid #b9b9b9; box-shadow: 4px 4px 3px -1px rgba(0, 0, 0, .55); }
    .d1 { left: 329px; top: 43px; width: 225px; height: 138px; padding: 3px 4px 0 2px; }
    .d2 { left: 547px; top: 87px; width: 318px; height: 270px; padding: 3px 2px; }
    .i { height: 22px; display: flex; align-items: center; }
    .d1 .i { padding-left: 32px; }
    .d1 .i.hl { background: #91c9f7; }
    .d1 .i svg { margin-left: auto; margin-right: 9px; margin-top: -2px; }
    .d2 .i { padding-left: 3px; }
    .d2 .i .ic { margin-right: 13px; }
  `;

  firstUpdated() {
    this.renderRoot.querySelectorAll<HTMLElement>(".t").forEach((e) => {
      const w = Number(e.dataset.w);
      const n = (e.textContent ?? "").length;
      const nat = e.getBoundingClientRect().width;
      e.style.letterSpacing = `${((w - nat) / n).toFixed(3)}px`;
    });
  }

  private head(name: string, w: number, close = true) {
    return html`<div class="ph">${t(name, w)}<span class="bt">${ic("float", 14)}${close ? ic("close", 14) : nothing}</span></div>`;
  }
  private check() {
    return html`<span class="cb"><svg width="11" height="11" viewBox="0 0 11 11"><path d="M2 5.500l2.500 2.500L9.500 2.500" fill="none" stroke="#222" stroke-width="1.300" /></svg></span>`;
  }
  private spin() {
    return html`<span class="spin"><svg width="6" height="4"><path d="M0 4h6L3 0z" /></svg><svg width="6" height="4"><path d="M0 0h6L3 4z" /></svg></span>`;
  }

  render() {
    return html`
      <div class="app">
        <div class="title">
          <svg class="logo" width="16" height="16" viewBox="0 0 24 24"><circle cx="11.500" cy="11.500" r="9" fill="none" stroke="#6aa52c" stroke-width="5" /><path d="M13 13l4-1 7 8v4h-5z" fill="#4e8a1d" /><path d="M9 9l6 0 0 3-3 3-4-3z" fill="#f0a235" /></svg>
          ${t("*Projet sans titre - QGIS", 123.5)}
          <svg class="ctl" width="102" height="12" viewBox="0 0 102 12"><path d="M1 6.500h10M46.500 4.500h6v6h-6zM48.500 4V2.500h6v6H53M91 1l9 9M100 1l-9 9" fill="none" stroke="#111" stroke-width="1.100" /></svg>
        </div>
        <div class="menubar">${MENUS.map(([m, w]) => html`<span class="m ${m === "Vecteur" ? "on" : ""}">${t(m, w)}</span>`)}</div>
        <div class="bar">
          ${grip(9.5, true)}${["new", "open", "save", "layout", "layoutmgr", "style"].map((n) => slot(n, 31, 22))}${gap(2)}${grip(11)}
          ${["pan", "panfull", "zoomin", "zoomout"].map((n) => slot(n, 30.5, 23))}${gap(220.5)}
          ${["bookmarknew", "bookmark", "refresh"].map((n) => slot(n, 30, 22))}${gap(2)}${grip(9)}
          ${slot("identify", 32)}${slot("action", 32)}${car(10, "#777")}${gap(2)}
          <span class="active"><span class="l">${ic("select", 22)}</span><span class="r">${caret()}</span></span>
          ${gap(1)}${slot("form", 30, 22)}${car(12)}
          ${slot("deselect", 31, 23)}${slot("table", 30, 22)}${slot("abacus", 31, 23)}${slot("gear", 31, 22)}${slot("sigma", 31, 21)}${slot("ruler", 31, 23)}${car(11)}${slot("tip", 32)}${slot("textann", 31, 23)}${car(10)}
        </div>
        <div class="bar">
          ${grip(9.5, true)}<span class="slot pencilbox" style="width:31px">${ic("pencils", 22)}${caret()}</span>
          ${["pencil", "savedit", "dots", "vertex"].map((n) => slot(n, 31, 22))}${car(12, "#666")}
          ${["modattr", "trash", "cut", "copy", "paste"].map((n) => slot(n, 31, 22))}${gap(323.5)}
          ${grip(12)}${slot("globegrid", 31)}${grip(12)}${slot("ball", 31, 18)}${grip(12)}${slot("screen", 31, 20)}${grip(12)}
        </div>
        <div class="bar">${grip(9.5, true)}${slot("sort", 31, 22)}</div>
        <div class="main">
          <div class="side">
            <div class="hg"></div>
            ${SIDE.map(([n, a]) => html`<div class="s">${ic(n)}${a ? caret() : nothing}</div>`)}
          </div>
          <div class="panels">
            ${this.head("Couches", 46)}
            <div class="pt">${["brush", "addgroup", "eye", "funnel", "eps"].map((n) => ic(n, 16))}${caret()}${gap(7)}${["expand", "collapse", "remove"].map((n) => ic(n, 16))}</div>
            <div class="list layers">
              <div class="lay sel">${this.check()}<span class="sym"><svg width="8" height="8"><circle cx="4" cy="4" r="3.300" fill="#4f9486" stroke="#3c6d63" /></svg></span>${t("Centroïdes", 60)}<span class="chip">${ic("chip", 15)}</span></div>
              <div class="lay">${this.check()}<span class="sym poly">${ic("pencil", 13)}</span>${t("fr dpts 1815-1860 v1920", 139)}</div>
            </div>
            ${this.head("Explorateur", 59)}
            <div class="pt">${["addsel", "refresh", "funnel", "collapse", "info"].map((n) => ic(n, 16))}</div>
            <div class="list exp">
              <div class="exrows">
                ${EXPL.map(([n, s, w, a]) => html`<div class="ex"><span class="tw">${a === ">" ? html`<svg width="8" height="10"><path d="M1.500 1l4 4-4 4" fill="none" stroke="#999" stroke-width="1.700" /></svg>` : a ? html`<svg width="9" height="8"><path d="M.5 1.500l4 4 4-4" fill="none" stroke="#333" stroke-width="1.600" /></svg>` : nothing}</span>${ic(n, 16)}${t(s, w)}</div>`)}
              </div>
              <div class="sb"><span class="a"><svg width="9" height="6"><path d="M1 5l3.500-3.500L8 5" fill="none" stroke="#444" stroke-width="1.700" /></svg></span><span class="th"></span><span class="a b"><svg width="9" height="6"><path d="M1 1l3.500 3.500L8 1" fill="none" stroke="#444" stroke-width="1.700" /></svg></span></div>
            </div>
            ${this.head("Numérisation avancée", 118)}
            <div class="pt cad">${ic("cad1", 16)}<span class="vs"></span>${ic("cad2", 16)}${gap(7)}${ic("cad3", 16)}${gap(7)}${ic("cad4", 16)}<span class="vs"></span>${ic("cad5", 16)}</div>
            <div class="msg">${t("Les outils CAD ne sont pas activés pour l'outil actuellement", 281)}${t("sélectionné", 54)}</div>
          </div>
          <div class="map"><france-map></france-map></div>
        </div>
        <div class="status">
          ${gap(4)}<span class="in ghost" style="width:241px">${gap(8)}${ic("search", 13)}${gap(6)}${t("Taper pour trouver (Ctrl+K)", 134)}</span>
          ${gap(8)}${t("Validation terminée (0 erreurs trouvées).", 195)}${gap(692)}
          ${t("Coordonnée", 59)}${gap(4)}<span class="in" style="width:102px">${gap(12)}${t("-9767,6283075", 74)}</span>
          ${gap(3)}${ic("mouse", 16)}${gap(12)}${t("Échelle", 33)}${gap(4)}
          <span class="in" style="width:78px">${gap(3)}${t("1:5012247", 52)}${gap(8)}<svg width="9" height="6"><path d="M1 1l3.500 3.500L8 1" fill="none" stroke="#555" stroke-width="1.200" /></svg></span>
          ${gap(9)}${ic("lock", 15)}${gap(7)}${t("Loupe", 29)}${gap(4)}<span class="in" style="width:81px">${gap(2)}${t("100%", 28)}${this.spin()}</span>
          ${gap(9)}${t("Rotation", 41)}${gap(11)}<span class="in" style="width:79px">${gap(1)}${t("0,0 °", 25)}${this.spin()}</span>
          ${gap(7)}${this.check()}${gap(4)}${t("Rendu", 31)}${gap(18)}${ic("crs", 15)}${gap(4)}${t("EPSG:2154", 54)}${gap(15)}${ic("bubble", 16)}
        </div>
      </div>
      <div class="dd d1">${SUB1.map(([s, w], k) => html`<div class="i ${k === 2 ? "hl" : ""}">${t(s, w)}<svg width="5" height="8"><path d="M0 0v8l4.500-4z" /></svg></div>`)}</div>
      <div class="dd d2">${SUB2.map(([n, s, w]) => html`<div class="i">${ic(n, 16)}${t(s, w)}</div>`)}</div>
    `;
  }
}
